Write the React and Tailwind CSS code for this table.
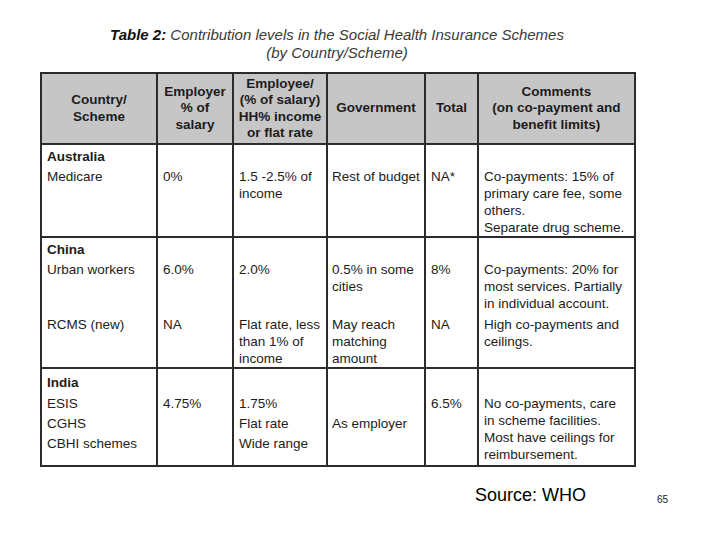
const lines = (arr, extra = "") =>
  arr.map((t, i) => (
    <div key={i} className={`leading-[17px] whitespace-nowrap ${extra}`}>
      {t}
    </div>
  ));

function Cell({ children, className = "" }) {
  return (
    <td className={`border-2 border-[#2b2b2b] align-top pl-[5px] pr-[1px] ${className}`}>
      {children}
    </td>
  );
}

function Head({ children }) {
  return (
    <th className="border-2 border-[#2b2b2b] bg-[#c6c6c6] align-middle text-center font-bold leading-[16.5px] px-[2px]">
      {children}
    </th>
  );
}

const Spacer = () => <div className="h-[20px]" />;

export default function App() {
  return (
    <div className="w-[720px] h-[540px] bg-white font-['Liberation_Sans',Arial,sans-serif] text-[#1c1c1c] relative">
      <div className="w-[594px] ml-[40px] pt-[26px]">
        {/* Title */}
        <div className="text-center italic text-[15px] leading-[18px] text-[#3a3a3a]">
          <div>
            <span className="font-bold text-[#111]">Table 2:</span> Contribution levels in the Social Health Insurance Schemes
          </div>
          <div>(by Country/Scheme)</div>
        </div>

        {/* Table */}
        <table className="mt-[10px] w-[594px] table-fixed border-collapse text-[13.5px]">
          <colgroup>
            <col className="w-[116px]" />
            <col className="w-[76px]" />
            <col className="w-[94px]" />
            <col className="w-[98px]" />
            <col className="w-[53px]" />
            <col className="w-[157px]" />
          </colgroup>
          <thead>
            <tr className="h-[71px]">
              <Head>Country/<br />Scheme</Head>
              <Head>Employer<br />% of<br />salary</Head>
              <Head>Employee/<br />(% of salary)<br />HH% income<br />or flat rate</Head>
              <Head>Government</Head>
              <Head>Total</Head>
              <Head>Comments<br />(on co-payment and<br />benefit limits)</Head>
            </tr>
          </thead>
          <tbody>
            {/* Australia */}
            <tr className="h-[92px]">
              <Cell className="pt-[3px]">
                <div className="h-[20px] leading-[17px] font-bold">Australia</div>
                {lines(["Medicare"])}
              </Cell>
              <Cell className="pt-[3px]"><Spacer />{lines(["0%"])}</Cell>
              <Cell className="pt-[3px]"><Spacer />{lines(["1.5 -2.5% of", "income"])}</Cell>
              <Cell className="pt-[3px] !pl-[4px]"><Spacer />{lines(["Rest of budget"])}</Cell>
              <Cell className="pt-[3px]"><Spacer />{lines(["NA*"])}</Cell>
              <Cell className="pt-[3px]">
                <Spacer />
                {lines(["Co-payments: 15% of", "primary care fee, some", "others.", "Separate drug scheme."])}
              </Cell>
            </tr>

            {/* China */}
            <tr className="h-[130px]">
              <Cell className="pt-[3px]">
                <div className="h-[20px] leading-[17px] font-bold">China</div>
                <div className="h-[55px]">{lines(["Urban workers"])}</div>
                {lines(["RCMS (new)"])}
              </Cell>
              <Cell className="pt-[3px]">
                <Spacer />
                <div className="h-[55px]">{lines(["6.0%"])}</div>
                {lines(["NA"])}
              </Cell>
              <Cell className="pt-[3px]">
                <Spacer />
                <div className="h-[55px]">{lines(["2.0%"])}</div>
                {lines(["Flat rate, less", "than 1% of", "income"])}
              </Cell>
              <Cell className="pt-[3px] !pl-[4px]">
                <Spacer />
                <div className="h-[55px]">{lines(["0.5% in some", "cities"])}</div>
                {lines(["May reach", "matching", "amount"])}
              </Cell>
              <Cell className="pt-[3px]">
                <Spacer />
                <div className="h-[55px]">{lines(["8%"])}</div>
                {lines(["NA"])}
              </Cell>
              <Cell className="pt-[3px]">
                <Spacer />
                <div className="h-[55px]">
                  {lines(["Co-payments: 20% for", "most services. Partially", "in individual account."])}
                </div>
                {lines(["High co-payments and", "ceilings."])}
              </Cell>
            </tr>

            {/* India */}
            <tr className="h-[98px]">
              <Cell className="pt-[5px]">
                <div className="h-[20px] leading-[17px] font-bold">India</div>
                {["ESIS", "CGHS", "CBHI schemes"].map((t) => (
                  <div key={t} className="leading-[20px] whitespace-nowrap">{t}</div>
                ))}
              </Cell>
              <Cell className="pt-[5px]">
                <Spacer />
                <div className="leading-[20px]">4.75%</div>
              </Cell>
              <Cell className="pt-[5px]">
                <Spacer />
                {["1.75%", "Flat rate", "Wide range"].map((t) => (
                  <div key={t} className="leading-[20px] whitespace-nowrap">{t}</div>
                ))}
              </Cell>
              <Cell className="pt-[5px] !pl-[4px]">
                <div className="h-[40px]" />
                <div className="leading-[20px] whitespace-nowrap">As employer</div>
              </Cell>
              <Cell className="pt-[5px]">
                <Spacer />
                <div className="leading-[20px]">6.5%</div>
              </Cell>
              <Cell className="pt-[5px]">
                <div className="h-[21px]" />
                {lines(["No co-payments, care", "in scheme facilities.", "Most have ceilings for", "reimbursement."])}
              </Cell>
            </tr>
          </tbody>
        </table>
      </div>

      {/* Footer */}
      <div className="absolute left-[475px] top-[484px] text-[18px] leading-[22px] text-black">
        Source: WHO
      </div>
      <div className="absolute left-[657px] top-[494px] text-[10px] leading-[12px] text-[#222]">
        65
      </div>
    </div>
  );
}
